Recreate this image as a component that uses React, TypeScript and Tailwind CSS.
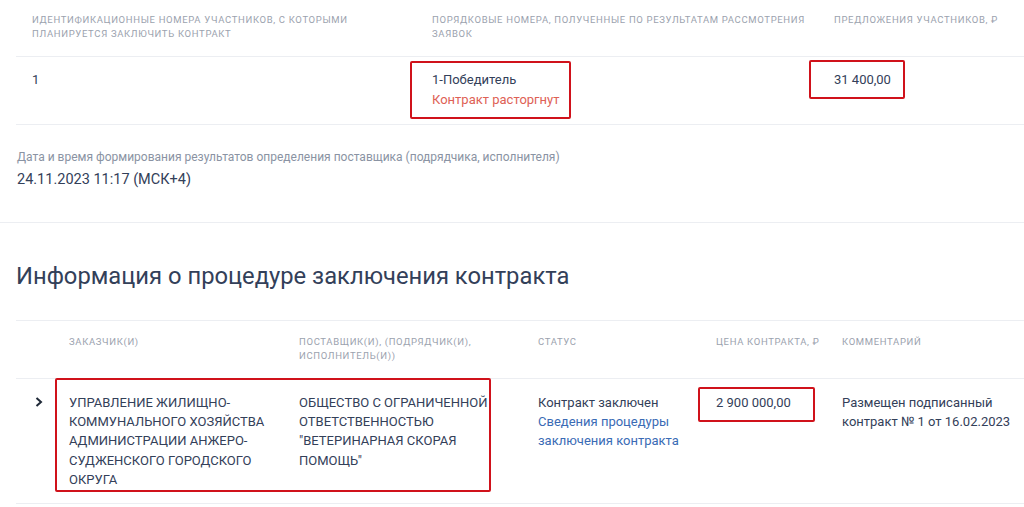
import React from "react";

const th = "text-[9.5px] leading-[14px] uppercase tracking-[0.07em] text-[#9ba2ae]";

export default function App() {
  return (
    <div className="relative w-[1024px] h-[507px] overflow-hidden bg-white text-[#334059]" style={{ fontFamily: "Roboto, 'Noto Sans', sans-serif" }}>
      {/* Top table */}
      <div className="ml-4">
        <div className="grid grid-cols-[400px_402px_1fr] border-b border-[#eceef2] pt-[13px] pb-[15px]">
          <div className={`px-4 ${th}`}>Идентификационные номера участников, с которыми<br />планируется заключить контракт</div>
          <div className={`pl-4 whitespace-nowrap ${th}`}>Порядковые номера, полученные по результатам рассмотрения<br />заявок</div>
          <div className={`px-4 ${th}`}>Предложения участников, ₽</div>
        </div>
        <div className="grid grid-cols-[400px_402px_1fr] border-b border-[#eceef2] pt-[13px] pb-[14px] text-[13px] leading-[20px]">
          <div className="px-4">1</div>
          <div className="px-4">
            <div>1-Победитель</div>
            <div className="text-[#de6155]">Контракт расторгнут</div>
          </div>
          <div className="px-4">31 400,00</div>
        </div>
      </div>

      {/* Date */}
      <div className="pl-[17px] pt-[24px] pb-[32px]">
        <div className="text-[12px] leading-[16px] text-[#8a93a3]">Дата и время формирования результатов определения поставщика (подрядчика, исполнителя)</div>
        <div className="mt-[5px] text-[14.5px] leading-[20px]">24.11.2023 11:17 (МСК+4)</div>
      </div>
      <div className="border-t border-[#eceef2]" />

      <h2 className="pl-[16px] pt-[38px] pb-[29px] text-[23.75px] leading-[30px] font-normal text-[#334059]">Информация о процедуре заключения контракта</h2>

      {/* Second table */}
      <div className="ml-4 border-t border-[#eceef2]">
        <div className="grid grid-cols-[53px_230px_239px_178px_126px_1fr] border-b border-[#eceef2] pt-[14px] pb-[15px]">
          <div />
          <div className={th}>Заказчик(и)</div>
          <div className={th}>Поставщик(и), (подрядчик(и),<br />исполнитель(и))</div>
          <div className={th}>Статус</div>
          <div className={th}>Цена контракта, ₽</div>
          <div className={th}>Комментарий</div>
        </div>
        <div className="grid grid-cols-[53px_230px_239px_178px_126px_1fr] border-b border-[#eceef2] pt-[14px] pb-[14px] text-[13px] leading-[19.2px]">
          <div className="pl-[18px] pt-[2px]">
            <svg width="10" height="12" viewBox="0 0 10 12" className="mt-[1px]">
              <path d="M2.5 2 L7 6 L2.5 10" fill="none" stroke="#1f2937" strokeWidth="2" />
            </svg>
          </div>
          <div className="uppercase pr-4">Управление жилищно-<br />коммунального хозяйства<br />администрации Анжеро-<br />Судженского городского<br />округа</div>
          <div className="uppercase">Общество с ограниченной<br />ответственностью<br />"ветеринарная скорая<br />помощь"</div>
          <div>
            <div>Контракт заключен</div>
            <div className="text-[#3a6bb5]">Сведения процедуры<br />заключения контракта</div>
          </div>
          <div>2 900 000,00</div>
          <div>Размещен подписанный<br />контракт № 1 от 16.02.2023</div>
        </div>
      </div>

      {/* Red highlight overlays */}
      <div className="absolute left-[410px] top-[61px] w-[161px] h-[58px] border-[2.5px] border-[#d0121b] rounded-[2px]" />
      <div className="absolute left-[809px] top-[60px] w-[96px] h-[39px] border-[2.5px] border-[#d0121b] rounded-[2px]" />
      <div className="absolute left-[55px] top-[378px] w-[436px] h-[114px] border-[2.5px] border-[#d0121b] rounded-[2px]" />
      <div className="absolute left-[698px] top-[387px] w-[117px] h-[35px] border-[2.5px] border-[#d0121b] rounded-[2px]" />
    </div>
  );
}
